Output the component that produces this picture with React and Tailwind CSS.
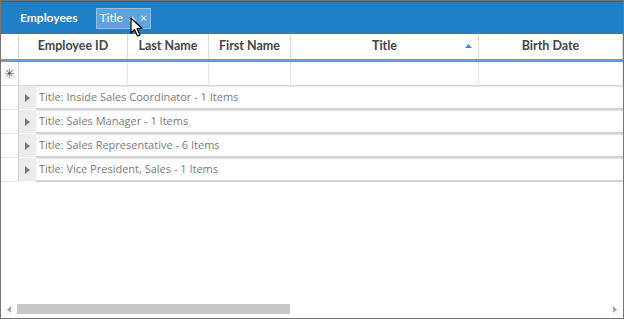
import React from "react";

const columns = [
  { title: "Employee ID", w: "w-[109px]" },
  { title: "Last Name", w: "w-[81px]" },
  { title: "First Name", w: "w-[82px]" },
  { title: "Title", w: "w-[188px]", sorted: true },
  { title: "Birth Date", w: "flex-1" },
];

const groups = [
  "Title: Inside Sales Coordinator - 1 Items",
  "Title: Sales Manager - 1 Items",
  "Title: Sales Representative - 6 Items",
  "Title: Vice President, Sales - 1 Items",
];

const Cursor = () => (
  <svg
    className="absolute left-[129px] top-[16px]"
    width="14"
    height="21"
    viewBox="0 0 14 21"
  >
    <path
      d="M1 1 L1 16 L4.5 12.5 L7.5 19 L10 18 L7 11.5 L12 11.5 Z"
      fill="#fff"
      stroke="#000"
      strokeWidth="1.2"
      strokeLinejoin="round"
    />
  </svg>
);

const App = () => {
  return (
    <div
      className="relative w-[624px] h-[319px] bg-white border border-[#747474] flex flex-col overflow-hidden"
      style={{ fontFamily: '"Open Sans", "Liberation Sans", sans-serif' }}
    >
      {/* group panel */}
      <div className="h-[33px] bg-[#1f80c7] flex items-center border-t border-[#2a5f86] shrink-0 font-['Lato',sans-serif]">
        <span className="ml-[19px] text-white text-[12px] font-bold">Employees</span>
        <div className="ml-[18px] h-[21px] pl-[3px] pr-[3px] flex items-center bg-[#5ca4dd] border border-[#8fc2ea] text-white text-[12px]">
          <span>Title</span>
          <svg className="ml-[6px]" width="7" height="5" viewBox="0 0 7 5">
            <path d="M0 5 L3.5 0.5 L7 5 Z" fill="#fff" />
          </svg>
          <span className="ml-[4px] text-[12px] leading-none">×</span>
        </div>
      </div>
      <Cursor />

      {/* column headers */}
      <div className="h-[25px] flex shrink-0 font-['Lato',sans-serif]">
        <div className="w-[18px] border-r border-[#d8d8d8]" />
        {columns.map((c) => (
          <div
            key={c.title}
            className={`${c.w} relative flex items-center justify-center border-r border-[#dcdcdc] text-[12.5px] font-bold text-[#444]`}
          >
            {c.title}
            {c.sorted && (
              <svg className="absolute right-[6px] top-[10px]" width="7" height="4" viewBox="0 0 7 4">
                <path d="M0 4 L3.5 0 L7 4 Z" fill="#3b8fd0" />
              </svg>
            )}
          </div>
        ))}
      </div>
      <div className="h-[3px] bg-[#5a9fd8] shrink-0" />

      {/* new item row */}
      <div className="h-[24px] flex border-b border-[#dadada] shrink-0">
        <div className="w-[18px] border-r border-[#cfcfcf] flex items-center justify-center text-[13px] text-[#555]">
          ✳
        </div>
        {columns.map((c) => (
          <div key={c.title} className={`${c.w} border-r border-[#e6e6e6]`} />
        ))}
      </div>

      {/* group rows */}
      {groups.map((g) => (
        <div key={g} className="h-[24px] flex shrink-0">
          <div className="w-[18px] border-r border-[#cfcfcf] border-b border-b-[#e6e6e6]" />
          <div className="w-[17px] bg-[#ebebeb] flex items-center justify-center border-b border-white">
            <svg width="5" height="8" viewBox="0 0 5 8">
              <path d="M0 0 L5 4 L0 8 Z" fill="#7a7a7a" />
            </svg>
          </div>
          <div className="flex-1 flex items-center pl-[3px] border-t border-[#e4e4e4] border-b-2 border-b-[#d4d4d4] text-[11px] text-[#7b7b7b]">
            {g}
          </div>
        </div>
      ))}

      <div className="flex-1" />

      {/* horizontal scrollbar */}
      <div className="h-[14px] flex items-center mb-[2px] shrink-0">
        <div className="w-[16px] flex items-center justify-center">
          <svg width="4" height="7" viewBox="0 0 4 7">
            <path d="M4 0 L0 3.5 L4 7 Z" fill="#a8a8a8" />
          </svg>
        </div>
        <div className="w-[273px] h-[10px] bg-[#c6c6c6]" />
        <div className="flex-1" />
        <div className="w-[16px] flex items-center justify-center">
          <svg width="4" height="7" viewBox="0 0 4 7">
            <path d="M0 0 L4 3.5 L0 7 Z" fill="#a8a8a8" />
          </svg>
        </div>
      </div>
    </div>
  );
};

export default App;
